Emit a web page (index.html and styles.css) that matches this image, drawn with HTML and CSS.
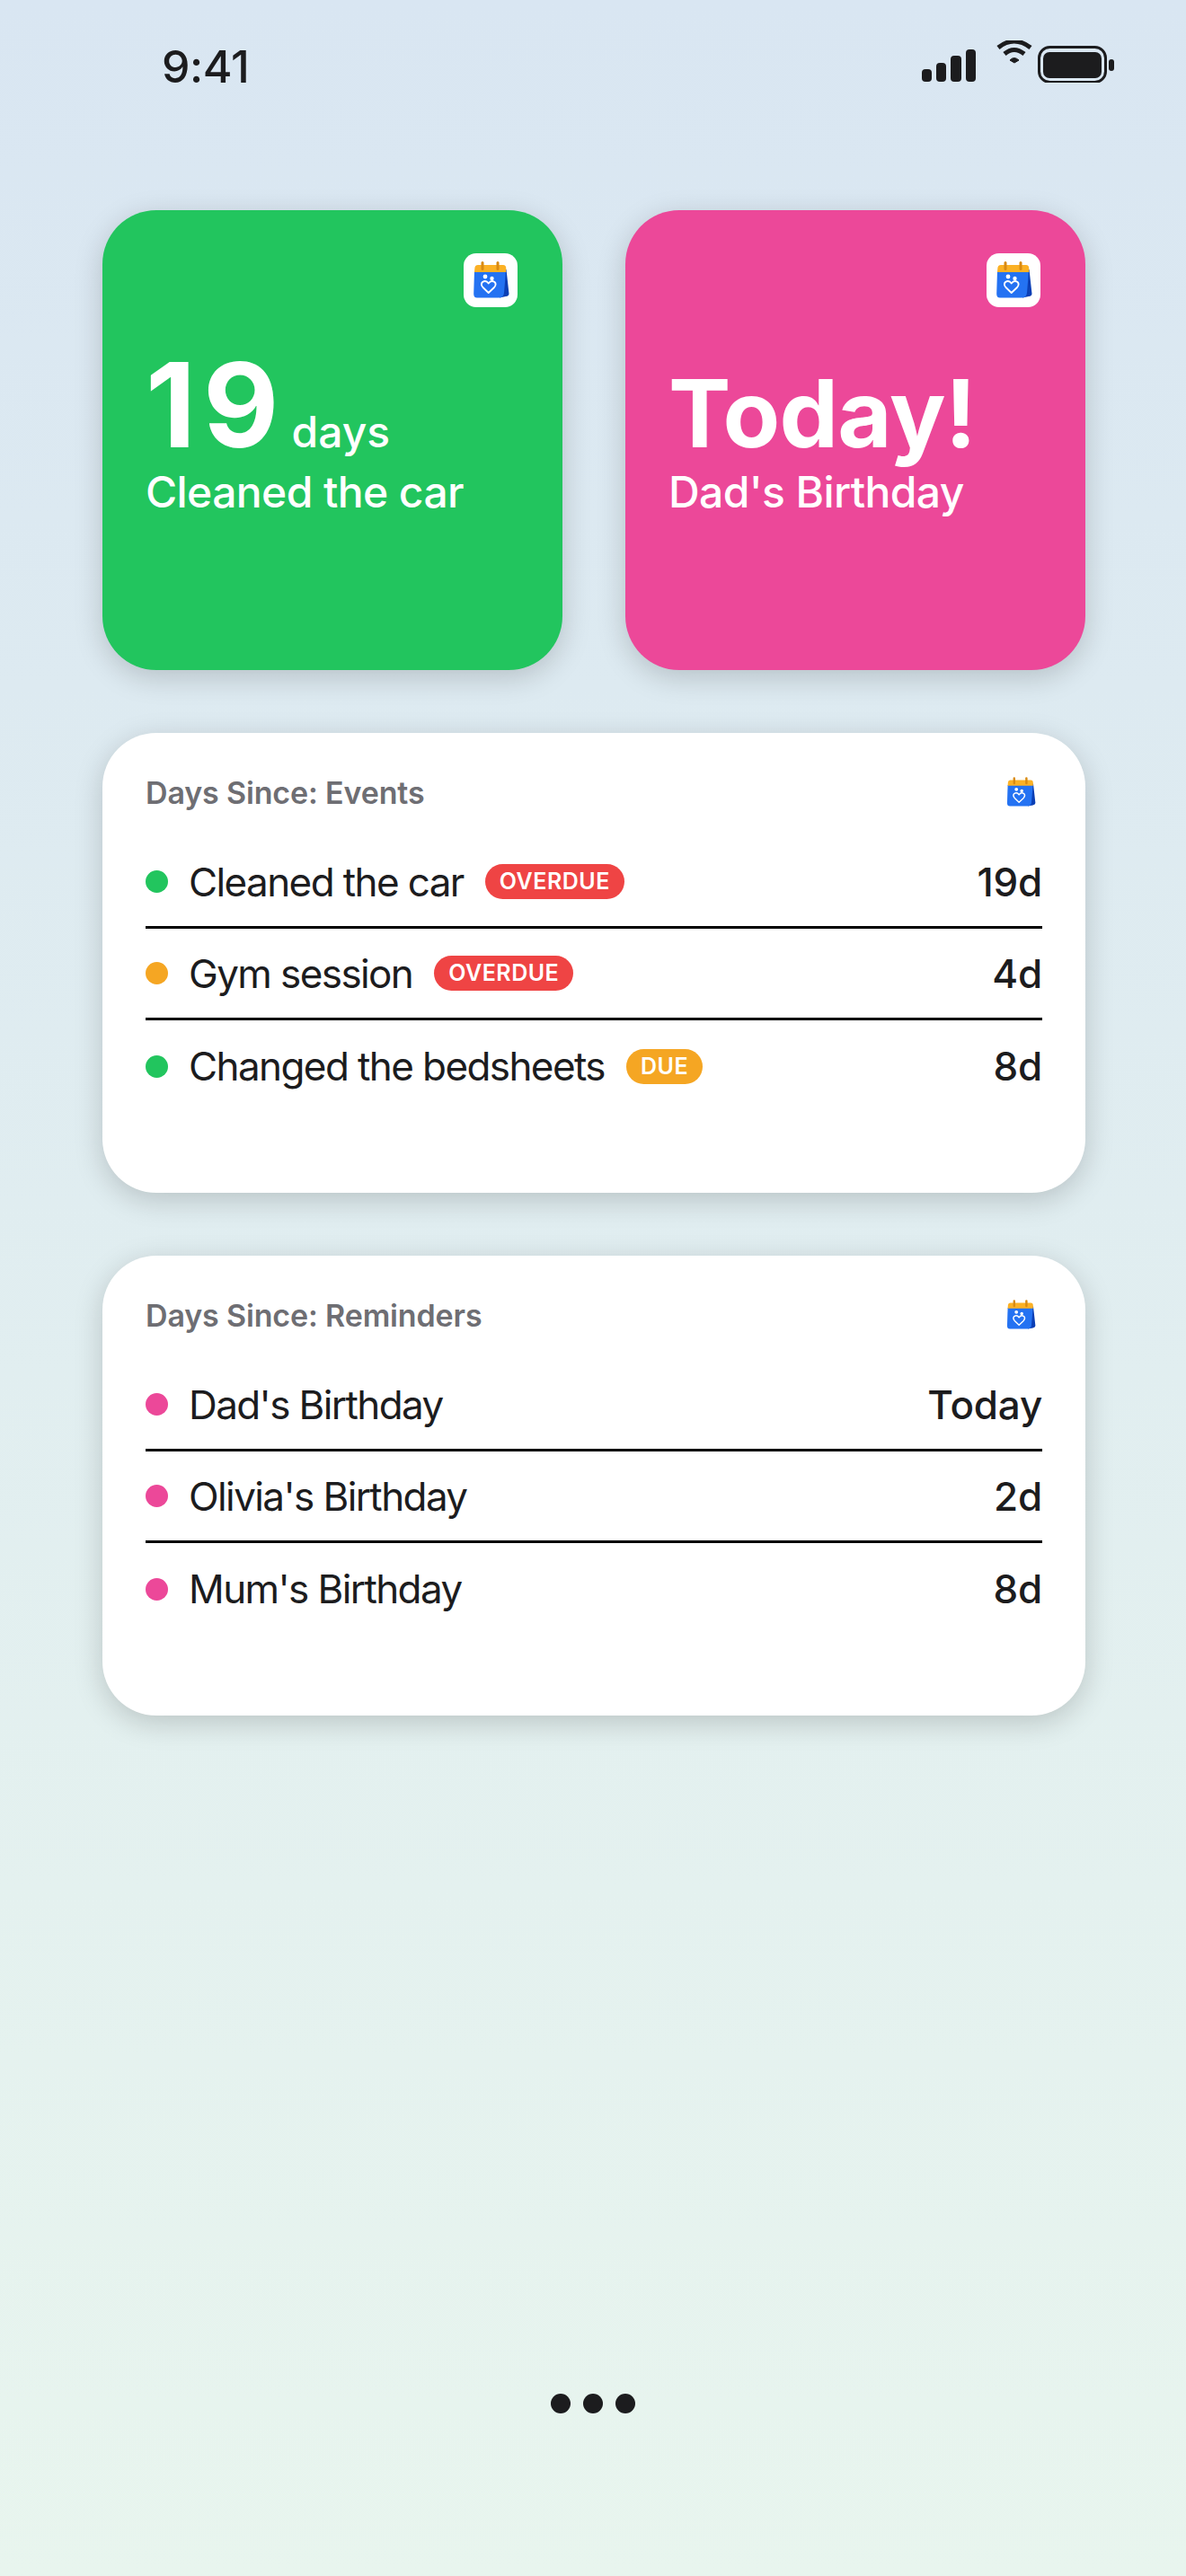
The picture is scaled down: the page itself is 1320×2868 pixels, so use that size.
FILE: index.html
```html
<!DOCTYPE html>
<html lang="en">
  <head>
    <meta charset="UTF-8" />
    <meta name="viewport" content="width=device-width, initial-scale=1.0" />
    <title>Days Since widgets</title>
    <link rel="stylesheet" href="styles.css">
  </head>
  <body>
    <svg class="defs" width="0" height="0">
      <symbol id="appicon" viewBox="0 0 60 60">
        <path d="M44 18 H47.500 L50.500 45 Q50.500 47.500 47 48 L40 49.500 Z" fill="#0b3fb5" />
        <path d="M12 20 H47 L45 44 Q44.500 49.500 39 49.500 H15 Q11.200 49.500 11.200 45 Z" fill="#2472f2" />
        <path d="M12 21 L12.300 17 Q12.500 13 16 13 H44 Q47.300 13 47.300 17 V21 Z" fill="#fbb125" />
        <rect x="19.500" y="9" width="3" height="10" rx="1.500" fill="#d98a12" />
        <rect x="36.500" y="9" width="3" height="10" rx="1.500" fill="#d98a12" />
        <circle cx="24" cy="26" r="2.400" fill="#fff" />
        <circle cx="31.500" cy="28" r="2.200" fill="#fff" />
        <path d="M27.700 44 L21.500 38 Q18.500 34.500 21 32 Q25 29.500 27.700 33.500 Q30.500 29.500 34.500 32 Q37 34.500 34 38 Z" fill="none" stroke="#fff" stroke-width="1.800" stroke-linejoin="round" />
      </symbol>
    </svg>

    <!-- status bar -->
    <div class="statusbar">
      <span class="clock">9:41</span>
      <svg class="statusicons" width="214" height="47" viewBox="0 0 214 47">
        <rect x="0" y="32" width="11" height="14" rx="4" fill="#1c1c1e" />
        <rect x="16" y="25" width="11" height="21" rx="4" fill="#1c1c1e" />
        <rect x="32" y="17" width="12" height="29" rx="4" fill="#1c1c1e" />
        <rect x="49" y="10" width="11" height="36" rx="4" fill="#1c1c1e" />
        <path d="M85 8 Q102.500 -6 121 8" fill="none" stroke="#1c1c1e" stroke-width="5" />
        <path d="M92 15 Q102.500 6 114 15" fill="none" stroke="#1c1c1e" stroke-width="5" />
        <path d="M98 22 Q102.500 17 108 22 L103 25 Z" fill="#1c1c1e" stroke="#1c1c1e" stroke-width="1" />
        <rect x="130.500" y="7.500" width="74" height="39" rx="12" fill="none" stroke="#1c1c1e" stroke-width="3" />
        <rect x="135" y="13" width="65" height="29" rx="7" fill="#1c1c1e" />
        <rect x="208" y="21" width="6" height="13" rx="3" fill="#1c1c1e" />
      </svg>
    </div>

    <main class="widgets">
      <div class="smallrow">
        <section class="smallcard green">
          <svg class="smallicon"><use href="#appicon" /></svg>
          <p class="bignum">19<span class="unit">days</span></p>
          <p class="smalllabel">Cleaned the car</p>
        </section>
        <section class="smallcard pink">
          <svg class="smallicon"><use href="#appicon" /></svg>
          <p class="bignum"><span class="today">Today!</span></p>
          <p class="smalllabel">Dad's Birthday</p>
        </section>
      </div>

      <section class="listcard">
        <div class="listhead">
          <h2>Days Since: Events</h2>
          <svg class="listicon"><use href="#appicon" /></svg>
        </div>
        <div class="row">
          <span class="dot dot-green"></span>
          <span class="name">Cleaned the car</span>
          <span class="badge badge-red">OVERDUE</span>
          <span class="count">19d</span>
        </div>
        <div class="row">
          <span class="dot dot-orange"></span>
          <span class="name">Gym session</span>
          <span class="badge badge-red">OVERDUE</span>
          <span class="count">4d</span>
        </div>
        <div class="row">
          <span class="dot dot-green"></span>
          <span class="name">Changed the bedsheets</span>
          <span class="badge badge-orange">DUE</span>
          <span class="count">8d</span>
        </div>
      </section>

      <section class="listcard">
        <div class="listhead">
          <h2>Days Since: Reminders</h2>
          <svg class="listicon"><use href="#appicon" /></svg>
        </div>
        <div class="row">
          <span class="dot dot-pink"></span>
          <span class="name">Dad's Birthday</span>
          <span class="count">Today</span>
        </div>
        <div class="row">
          <span class="dot dot-pink"></span>
          <span class="name">Olivia's Birthday</span>
          <span class="count">2d</span>
        </div>
        <div class="row">
          <span class="dot dot-pink"></span>
          <span class="name">Mum's Birthday</span>
          <span class="count">8d</span>
        </div>
      </section>
    </main>

    <!-- page dots -->
    <div class="pager">
      <span></span>
      <span></span>
      <span></span>
    </div>
  </body>
</html>
```

FILE: styles.css
```css
* {
  box-sizing: border-box;
  font-family: "Inter", "Liberation Sans", sans-serif;
}

body {
  margin: 0;
  width: 1320px;
  height: 2868px;
  display: flex;
  flex-direction: column;
  background: linear-gradient(180deg, #d9e6f2 0%, #e8f5ee 100%);
  color: #1c1c1e;
}

.defs {
  position: absolute;
}

/* status bar */
.statusbar {
  height: 234px;
  padding: 45px 80px 0 180px;
  display: flex;
  justify-content: space-between;
  align-items: flex-start;
}
.clock {
  font-size: 50px;
  font-weight: 500;
  line-height: 58px;
  letter-spacing: -0.4px;
}

/* widgets */
.widgets {
  padding: 0 112px 0 114px;
  display: flex;
  flex-direction: column;
  gap: 70.5px;
}
.smallrow {
  display: flex;
  gap: 70px;
}
.smallcard {
  position: relative;
  width: 512px;
  height: 511.5px;
  padding: 152px 48px 0;
  border-radius: 60px;
  color: white;
  box-shadow: 0 8px 32px rgba(0, 0, 0, 0.18);
}
.green {
  background-color: #22c55e;
}
.pink {
  background-color: #ec4899;
}
.smallicon {
  position: absolute;
  top: 48px;
  right: 50px;
  width: 60px;
  height: 60px;
  background-color: white;
  border-radius: 14px;
}
.bignum {
  margin: 0;
  font-size: 130px;
  font-weight: 700;
  line-height: 130px;
  letter-spacing: 8px;
}
.today {
  font-size: 104px;
  line-height: 1;
  letter-spacing: -0.8px;
}
.unit {
  margin-left: 6px;
  font-size: 48px;
  font-weight: 500;
  line-height: 1;
  letter-spacing: 0;
}
.smalllabel {
  margin: 3px 0 0;
  font-size: 48px;
  font-weight: 500;
  line-height: 58px;
  letter-spacing: -0.6px;
}

.listcard {
  height: 511.5px;
  padding: 42px 48px 0;
  background-color: white;
  border-radius: 60px;
  box-shadow: 0 8px 32px rgba(0, 0, 0, 0.18);
}
.listhead {
  display: flex;
  justify-content: space-between;
  align-items: center;
  height: 48px;
  margin-bottom: 26px;
}
.listhead h2 {
  margin: 0;
  font-size: 34px;
  font-weight: 600;
  letter-spacing: -0.15px;
  color: #6e6e73;
}
.listicon {
  width: 48px;
  height: 48px;
}

.row {
  display: flex;
  align-items: center;
  height: 102px;
  border-bottom: 3px solid black;
}
.row:last-child {
  border-bottom: none;
}
.dot {
  width: 25px;
  height: 25px;
  border-radius: 50%;
  margin-right: 23px;
}
.dot-green {
  background-color: #22c55e;
}
.dot-orange {
  background-color: #f5a623;
}
.dot-pink {
  background-color: #ec4899;
}
.name {
  font-size: 44px;
  letter-spacing: -1.6px;
}
.badge {
  margin-left: 24px;
  padding: 0 16px;
  height: 39px;
  line-height: 39px;
  border-radius: 20px;
  font-size: 25px;
  font-weight: 600;
  letter-spacing: 0.5px;
  color: white;
}
.badge-red {
  background-color: #ef4444;
}
.badge-orange {
  background-color: #f5a623;
}
.count {
  margin-left: auto;
  font-size: 44px;
  font-weight: 500;
  letter-spacing: -0.2px;
}

/* page dots */
.pager {
  margin-top: auto;
  padding-bottom: 181px;
  display: flex;
  justify-content: center;
  gap: 14px;
}
.pager span {
  width: 22px;
  height: 22px;
  border-radius: 50%;
  background-color: #1c1c1e;
}
```
